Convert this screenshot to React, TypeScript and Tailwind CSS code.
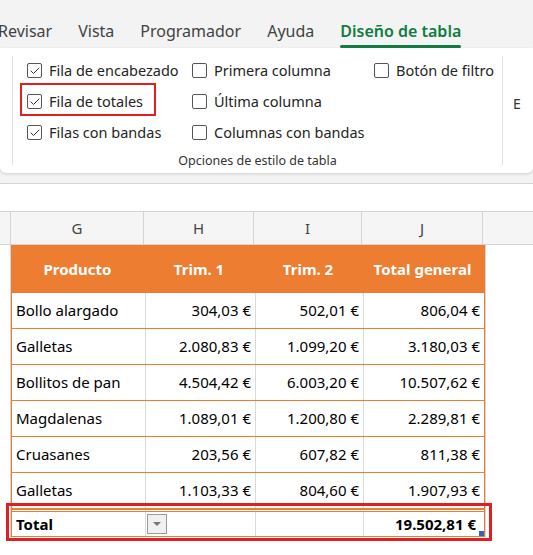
import { Check } from 'lucide-react'

const rows = [
  ['Bollo alargado', '304,03 €', '502,01 €', '806,04 €'],
  ['Galletas', '2.080,83 €', '1.099,20 €', '3.180,03 €'],
  ['Bollitos de pan', '4.504,42 €', '6.003,20 €', '10.507,62 €'],
  ['Magdalenas', '1.089,01 €', '1.200,80 €', '2.289,81 €'],
  ['Cruasanes', '203,56 €', '607,82 €', '811,38 €'],
  ['Galletas', '1.103,33 €', '804,60 €', '1.907,93 €'],
]

function Box({ checked, label }: { checked?: boolean; label: string }) {
  return (
    <div className="flex items-center gap-[7px] h-[31px]">
      <div className="w-[15px] h-[15px] border border-[#555] rounded-[2px] bg-white flex items-center justify-center">
        {checked && <Check className="w-[12px] h-[12px] text-[#333]" strokeWidth={2} />}
      </div>
      <span className="text-[14.5px] text-[#242424]">{label}</span>
    </div>
  )
}

const cols = 'grid grid-cols-[133px_110px_108px_121px]'

export default function App() {
  return (
    <div className="w-[533px] h-[555px] overflow-hidden bg-white relative" style={{ fontFamily: '"Noto Sans", "Open Sans", sans-serif' }}>
      <div className="bg-[#f3f3f3] pb-[10px]">
        <div className="flex h-[48px] items-end pb-[5px] gap-[26px] text-[16px] text-[#424242]">
          <span className="-ml-[2px]">Revisar</span>
          <span>Vista</span>
          <span>Programador</span>
          <span>Ayuda</span>
          <span className="text-[#107c41] font-semibold relative">
            Diseño de tabla
            <span className="absolute left-0 right-0 -bottom-[5px] h-[3px] bg-[#107c41] rounded" />
          </span>
        </div>
        <div className="bg-white h-[125px] rounded-b-[6px] shadow-[0_1px_3px_rgba(0,0,0,0.15)] flex">
          <div className="w-[13px] border-r border-[#e0e0e0] my-[8px]" />
          <div className="w-[490px] border-r border-[#e0e0e0] my-[8px] flex flex-col">
            <div className="flex pl-[14px] -mt-[1px]">
              <div className="w-[165px]">
                <Box checked label="Fila de encabezado" />
                <Box checked label="Fila de totales" />
                <Box checked label="Filas con bandas" />
              </div>
              <div className="w-[182px]">
                <Box label="Primera columna" />
                <Box label="Última columna" />
                <Box label="Columnas con bandas" />
              </div>
              <div>
                <Box label="Botón de filtro" />
              </div>
            </div>
            <div className="text-center text-[12.5px] text-[#333] mt-[4px]">Opciones de estilo de tabla</div>
          </div>
          <div className="pl-[10px] pt-[45px] text-[14px] text-[#333]">E</div>
        </div>
      </div>
      <div className="h-[29px] border-y border-[#d4d4d4] bg-white" />
      <div className="flex h-[33px] bg-[#f5f5f5] border-b border-[#d4d4d4] text-[15px] text-[#444]">
        <div className="w-[11px] border-r border-[#d4d4d4]" />
        {['G', 'H', 'I', 'J'].map((c, i) => (
          <div key={c} className={`flex items-center justify-center border-r border-[#d4d4d4] ${['w-[133px]', 'w-[110px]', 'w-[108px]', 'w-[121px]'][i]}`}>{c}</div>
        ))}
      </div>
      <div className="flex">
        <div className="w-[11px] border-r border-[#d4d4d4]" />
        <div className="text-[15px] text-black">
          <div className={`${cols} h-[48px] bg-[#ed7d31] text-white font-bold`}>
            <div className="flex items-center justify-center">Producto</div>
            <div className="flex items-center justify-center">Trim. 1</div>
            <div className="flex items-center justify-center">Trim. 2</div>
            <div className="flex items-center justify-center">Total general</div>
          </div>
          {rows.map((r, i) => (
            <div key={i} className={`${cols} h-[36px] border-b border-[#ed7d31] border-x`}>
              {r.map((v, j) => (
                <div key={j} className={`flex items-center px-[4px] ${j ? 'justify-end border-l border-[#d9d9d9]' : ''}`}>{v}</div>
              ))}
            </div>
          ))}
          <div className={`${cols} h-[28px] border-t-[3px] border-double border-[#ed7d31] border-b border-x font-bold relative`}>
            <div className="flex items-center pl-[4px]">Total</div>
            <div className="border-l border-[#d9d9d9] flex items-center pl-[1px]">
              <span className="w-[20px] h-[20px] border border-[#999] bg-[#f0f0f0] flex items-center justify-center">
                <span className="w-0 h-0 border-x-[4px] border-x-transparent border-t-[4px] border-t-[#777]" />
              </span>
            </div>
            <div className="border-l border-[#d9d9d9]" />
            <div className="flex items-center justify-end pr-[8px] border-l border-[#d9d9d9]">19.502,81 €</div>
            <span className="absolute right-0 bottom-0 w-[5px] h-[5px] bg-[#3b5bbf]" />
          </div>
        </div>
        <div className="flex-1 border-l border-[#d4d4d4]" />
      </div>
      <div className="absolute left-[20px] top-[83px] w-[136px] h-[33px] border-2 border-[#e02020]" />
      <div className="absolute left-[6px] top-[503px] w-[486px] h-[38px] border-[3px] border-[#e02020]" />
    </div>
  )
}
